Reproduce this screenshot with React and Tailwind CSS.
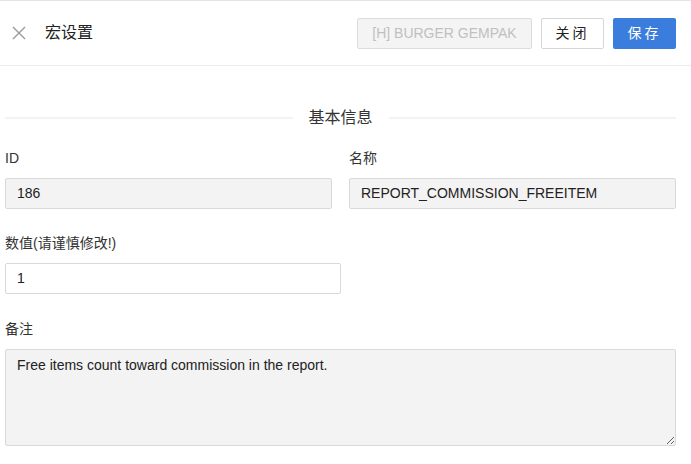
import React from 'react';

const font = { fontFamily: '"Liberation Sans", Arial, "Noto Sans CJK SC", sans-serif' };

// ── Header ─────────────────────────────────────────────────────────────────────
function Header() {
  return (
    <header className="h-[66px] border-t border-b border-t-[#e4e4e4] border-b-[#ececec] flex items-center justify-between pl-[12px] pr-[15px]">
      <div className="flex items-center">
        <svg width="14" height="14" viewBox="0 0 14 14" className="text-[#9a9a9a]">
          <path d="M1 1 L13 13 M13 1 L1 13" stroke="currentColor" strokeWidth="1.4" fill="none" />
        </svg>
        <h1 className="ml-[19px] text-[16px] text-[#222]">宏设置</h1>
      </div>
      <div className="flex items-center gap-[9px]">
        <button disabled className="h-[31px] w-[175px] rounded-[2px] border border-[#dcdcdc] bg-[#f4f4f4] text-[14px] text-[#c0c0c0]">
          [H] BURGER GEMPAK
        </button>
        <button className="h-[31px] w-[63px] rounded-[2px] border border-[#d6d6d6] bg-white text-[14px] text-[#222] tracking-[3px]">
          关闭
        </button>
        <button className="h-[31px] w-[63px] rounded-[2px] bg-[#3a7ddc] text-[14px] text-white tracking-[3px]">
          保存
        </button>
      </div>
    </header>
  );
}

function Label({ children, className = '' }) {
  return <div className={`h-[20px] leading-[20px] text-[14px] text-[#333] ${className}`}>{children}</div>;
}

// ── Form ───────────────────────────────────────────────────────────────────────
function Form() {
  return (
    <div className="pl-[5px] pr-[15px]">
      <div className="mt-[42px] h-[20px] flex items-center gap-[16px]">
        <div className="flex-1 h-[2px] bg-[#f3f3f3]" />
        <span className="text-[16px] text-[#333]">基本信息</span>
        <div className="flex-1 h-[2px] bg-[#f3f3f3]" />
      </div>

      <div className="mt-[20px] grid grid-cols-2 gap-x-[17px]">
        <div>
          <Label>ID</Label>
          <div className="mt-[10px] h-[31px] flex items-center px-[11px] rounded-[2px] border border-[#d9d9d9] bg-[#f3f3f3] text-[14px] text-[#222]">
            186
          </div>
        </div>
        <div>
          <Label>名称</Label>
          <div className="mt-[10px] h-[31px] flex items-center px-[11px] rounded-[2px] border border-[#d9d9d9] bg-[#f3f3f3] text-[14px] text-[#222]">
            REPORT_COMMISSION_FREEITEM
          </div>
        </div>
      </div>

      <Label className="mt-[24px]">数值(请谨慎修改!)</Label>
      <div className="mt-[10px] w-[336px] h-[31px] flex items-center px-[11px] rounded-[2px] border border-[#d9d9d9] bg-white text-[14px] text-[#222]">
        1
      </div>

      <Label className="mt-[25px]">备注</Label>
      <textarea
        readOnly
        value="Free items count toward commission in the report."
        className="mt-[10px] block w-full h-[97px] px-[11px] pt-[5px] rounded-[2px] border border-[#d9d9d9] bg-[#f3f3f3] text-[14px] text-[#222] resize-y outline-none"
        style={font}
      />
    </div>
  );
}

export default function App() {
  return (
    <div className="w-[691px] h-[464px] bg-white overflow-hidden" style={font}>
      <Header />
      <Form />
    </div>
  );
}
